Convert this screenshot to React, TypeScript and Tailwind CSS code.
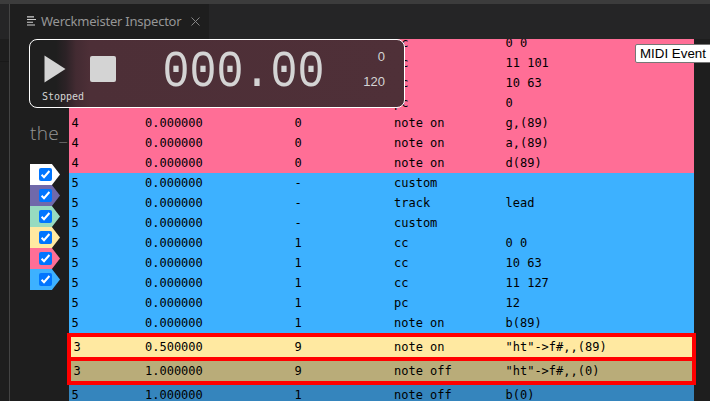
type Row = { t: string; pos: string; ch: string; kind: string; val: string; bg: string; mark?: boolean };

const PINK = 'bg-[#ff6e96]';
const BLUE = 'bg-[#3db1ff]';

const rows: Row[] = [
  { t: '', pos: '', ch: '', kind: 'cc', val: '0 0', bg: PINK },
  { t: '', pos: '', ch: '', kind: 'cc', val: '11 101', bg: PINK },
  { t: '', pos: '', ch: '', kind: 'cc', val: '10 63', bg: PINK },
  { t: '', pos: '', ch: '', kind: 'pc', val: '0', bg: PINK },
  { t: '4', pos: '0.000000', ch: '0', kind: 'note on', val: 'g,(89)', bg: PINK },
  { t: '4', pos: '0.000000', ch: '0', kind: 'note on', val: 'a,(89)', bg: PINK },
  { t: '4', pos: '0.000000', ch: '0', kind: 'note on', val: 'd(89)', bg: PINK },
  { t: '5', pos: '0.000000', ch: '-', kind: 'custom', val: '', bg: BLUE },
  { t: '5', pos: '0.000000', ch: '-', kind: 'track', val: 'lead', bg: BLUE },
  { t: '5', pos: '0.000000', ch: '-', kind: 'custom', val: '', bg: BLUE },
  { t: '5', pos: '0.000000', ch: '1', kind: 'cc', val: '0 0', bg: BLUE },
  { t: '5', pos: '0.000000', ch: '1', kind: 'cc', val: '10 63', bg: BLUE },
  { t: '5', pos: '0.000000', ch: '1', kind: 'cc', val: '11 127', bg: BLUE },
  { t: '5', pos: '0.000000', ch: '1', kind: 'pc', val: '12', bg: BLUE },
  { t: '5', pos: '0.000000', ch: '1', kind: 'note on', val: 'b(89)', bg: BLUE },
  { t: '3', pos: '0.500000', ch: '9', kind: 'note on', val: '"ht"->f#,,(89)', bg: 'bg-[#ffe9a1]', mark: true },
  { t: '3', pos: '1.000000', ch: '9', kind: 'note off', val: '"ht"->f#,,(0)', bg: 'bg-[#b9ac79]', mark: true },
  { t: '5', pos: '1.000000', ch: '1', kind: 'note off', val: 'b(0)', bg: 'bg-[#3585bd]' },
];

const tracks = ['bg-white', 'bg-[#7069aa]', 'bg-[#97dbc0]', 'bg-[#ffe9a1]', 'bg-[#ff6e96]', 'bg-[#3db1ff]'];

function EventRow({ r, joined }: { r: Row; joined: boolean }) {
  const frame = r.mark
    ? `-mx-[2px] border-4 border-[#ff0000] h-7 ${joined ? '-mt-1' : ''}`
    : 'h-5';
  return (
    <div className={`flex shrink-0 items-center whitespace-pre ${frame} ${r.bg}`}>
      <span className={r.mark ? 'w-[74px] pl-[2.5px]' : 'w-[76px] pl-[2.5px]'}>{r.t}</span>
      <span className="w-[149.5px]">{r.pos}</span>
      <span className="w-[99.5px]">{r.ch}</span>
      <span className="w-[111.5px]">{r.kind}</span>
      <span>{r.val}</span>
    </div>
  );
}

function TrackTag({ color }: { color: string }) {
  return (
    <div className={`flex h-[21px] w-[30px] items-center pl-[9px] [clip-path:polygon(0_0,73%_0,100%_50%,73%_100%,0_100%)] ${color}`}>
      <span className="flex size-[13px] items-center justify-center rounded-[2px] bg-[#0075ff]">
        <svg width="13" height="13" viewBox="0 0 13 13" fill="none" stroke="white" strokeWidth="2">
          <path d="M2.6 6.8 5 9.2 10.4 3" />
        </svg>
      </span>
    </div>
  );
}

function Transport() {
  return (
    <div className="absolute top-[39px] left-[29px] h-[69px] w-[376px] rounded-[8px] border border-white bg-[linear-gradient(90deg,#1f1f1f_0px,#1f1f1f_26px,#2c2226_36px,#432b32_46px,#4d2f37_60px,#4f3038_100%)] text-[#d4d4d4]">
      <svg className="absolute top-[15px] left-[14px]" width="22" height="28" viewBox="0 0 22 28">
        <path d="M0.5 0.5 21.5 14 0.5 27.5Z" fill="#d4d4d4" />
      </svg>
      <div className="absolute top-[16px] left-[60px] h-[26px] w-[26px] rounded-[2px] bg-[#d4d4d4]" />
      <div className="absolute top-[50px] left-[12px] font-['DejaVu_Sans_Mono',monospace] text-[10px] leading-[14px]">Stopped</div>
      <div className="absolute top-[5px] left-[132.5px] origin-center scale-y-[1.15] font-['Liberation_Mono',monospace] text-[45px] leading-[56px]">000.00</div>
      <div className="absolute top-[7px] right-[19px] text-right font-['Liberation_Sans',sans-serif] text-[13px] leading-[20px]">0</div>
      <div className="absolute top-[32px] right-[19px] text-right font-['Liberation_Sans',sans-serif] text-[13px] leading-[20px]">120</div>
    </div>
  );
}

export default function App() {
  return (
    <div className="relative flex h-[401px] w-[710px] flex-col overflow-hidden bg-[#1e1e1e]">
      <div className="h-1 shrink-0 bg-[#3c3c3c]" />
      <div className="flex min-h-0 flex-1">
        <div className="flex w-[9px] shrink-0 flex-col">
          <div className="h-[35px] bg-[#252526]" />
          <div className="h-[23px] border-b border-[#181818] bg-[#1e1e1e]" />
        </div>
        <div className="w-px shrink-0 bg-[#444444]" />
        <div className="flex min-w-0 flex-1 flex-col">
          <div className="flex h-[35px] shrink-0 bg-[#252526]">
            <div className="flex w-[199px] items-center bg-[#1e1e1e] pl-[17px]">
              <svg className="mb-px" width="9" height="10" viewBox="0 0 9 10" stroke="#d0d0d0" strokeWidth="1.1" fill="none">
                <path d="M0 .9h7M0 3.5h9M0 6.3h6M0 9h8" />
              </svg>
              <span className="mb-[2px] ml-[5px] w-[142px] font-['Noto_Sans',sans-serif] text-[13px] leading-5 tracking-[-0.23px] whitespace-nowrap text-[#969696]">Werckmeister Inspector</span>
              <svg className="ml-[8px]" width="9" height="9" viewBox="0 0 9 9" stroke="#858585" fill="none">
                <path d="M.5 .5 8.5 8.5M8.5 .5 .5 8.5" />
              </svg>
            </div>
          </div>
          <div className="flex min-h-0 flex-1 pl-5">
            <div className="flex w-[39px] shrink-0 flex-col">
              <div className="mt-[82px] h-[24px] font-['Open_Sans',sans-serif] text-[19px] leading-6 font-light tracking-[0.4px] whitespace-nowrap text-[#969696]">the_</div>
              <div className="mt-[19px] flex flex-col">
                {tracks.map((c) => <TrackTag key={c} color={c} />)}
              </div>
            </div>
            <div className="w-[629px] shrink-0 overflow-hidden -ml-[2px] px-[2px]">
              <div className="-mt-[6px] flex flex-col font-['DejaVu_Sans_Mono',monospace] text-[12px] leading-5 text-black">
                {rows.map((r, i) => (
                  <EventRow key={i} r={r} joined={i > 0 && !!rows[i - 1].mark} />
                ))}
              </div>
            </div>
          </div>
        </div>
      </div>
      <Transport />
      <div className="absolute top-[44px] left-[635px] h-[19px] w-[80px] rounded-[2px] border border-[#767676] bg-white pl-[4px] font-['Liberation_Sans',sans-serif] text-[13.33px] leading-[18px] whitespace-nowrap text-black">MIDI Event</div>
    </div>
  );
}
